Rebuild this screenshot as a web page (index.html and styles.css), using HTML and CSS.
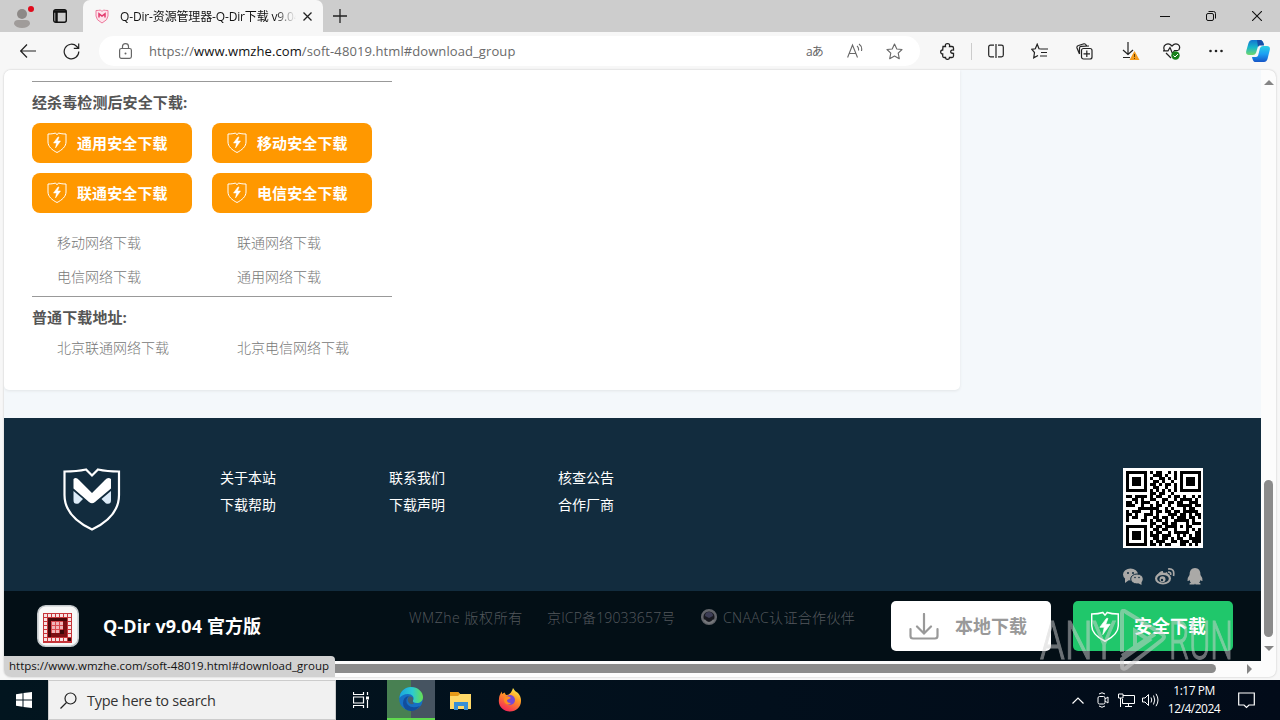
FILE: index.html
```html
<!DOCTYPE html>
<html lang="zh-CN">
<head>
  <meta charset="UTF-8">
  <title>Q-Dir-资源管理器-Q-Dir下载</title>
  <link rel="stylesheet" href="styles.css">
</head>
<body>
  <!-- shared icons -->
  <svg class="defs">
    <symbol id="shield" viewBox="0 0 20 21">
      <path d="M1 2C4 2 6.500 1.700 8.500 1L10 2.800 11.500 1C13.500 1.700 16 2 19 2V10C19 14.500 15 18 10 20.500 5 18 1 14.500 1 10Z" fill="none" stroke="currentColor" stroke-width="1"/>
      <path d="M11 5L6.500 11H9.500L8.500 16 13.500 9H10.500L12 5Z" fill="currentColor" stroke="currentColor" stroke-width=".5"/>
    </symbol>
  </svg>

  <div class="tabstrip">
    <svg class="profile" width="28" height="30" viewBox="0 0 28 30">
      <circle cx="14" cy="13" r="5" fill="#8d8987"/><path d="M6 23Q6 19 10 19H18Q22 19 22 23 20 27 14 27 8 27 6 23Z" fill="#a09c9a"/><circle cx="23" cy="8" r="3" fill="#e00b1c"/>
    </svg>
    <svg class="tab-menu" width="14" height="14" viewBox="0 0 14 14"><rect x=".7" y=".7" width="12.600" height="12.600" rx="2" fill="none" stroke="#111" stroke-width="1.400"/><path d="M1 2.500H13M3.500 3V13" stroke="#111" stroke-width="2.500"/></svg>
    <div class="tab">
      <svg width="14" height="15" viewBox="0 0 14 15"><path d="M1 1.500Q4 1.500 5.500 1L7 2.500 8.500 1Q10 1.500 13 1.500V7Q13 11 7 14 1 11 1 7Z" fill="#fde4ec" stroke="#ee7a9d"/><path d="M4 8.500V4.800L7 7 10 4.800V8.500" fill="none" stroke="#e33b6e" stroke-width="1.500"/></svg>
      <span class="tab-title">Q-Dir-资源管理器-Q-Dir下载 v9.04</span>
      <svg class="tab-close" width="9" height="9" viewBox="0 0 9 9"><path d="M.5.5L8.500 8.500M8.500.5L.5 8.500" stroke="#222" stroke-width="1.300"/></svg>
    </div>
    <svg class="new-tab" width="14" height="14" viewBox="0 0 14 14"><path d="M7 0V14M0 7H14" stroke="#222" stroke-width="1.300"/></svg>
    <div class="window-buttons">
      <svg width="10" height="10" viewBox="0 0 10 10"><path d="M0 5.500H10" stroke="#111"/></svg>
      <svg width="10" height="10" viewBox="0 0 10 10"><rect x=".5" y="2.500" width="7" height="7" rx="1.500" fill="none" stroke="#111"/><path d="M2.500.5H7.500Q9.500.5 9.500 2.500V7.500" fill="none" stroke="#111"/></svg>
      <svg width="10" height="10" viewBox="0 0 10 10"><path d="M0 0L10 10M10 0L0 10" stroke="#111" stroke-width="1.100"/></svg>
    </div>
  </div>

  <div class="toolbar">
    <svg class="back" width="16" height="14" viewBox="0 0 16 14"><path d="M16 7H1M7 .5L.7 7 7 13.500" fill="none" stroke="#222" stroke-width="1.200"/></svg>
    <svg class="reload" width="17" height="17" viewBox="0 0 17 17"><path d="M15.800 8.500A7.300 7.300 0 1 1 13.800 3.500L15.500 5.300M15.700.5V5.400H10.800" fill="none" stroke="#222" stroke-width="1.200"/></svg>
    <div class="address">
      <svg class="lock" width="13" height="16" viewBox="0 0 13 16"><rect x=".6" y="5.500" width="11.800" height="9.800" rx="1.800" fill="none" stroke="#666" stroke-width="1.200"/><path d="M3.500 5.500V3.500Q3.500.7 6.500.7T9.500 3.500V5.500" fill="none" stroke="#666" stroke-width="1.200"/><circle cx="6.500" cy="10.500" r="1" fill="#666"/></svg>
      <span class="url">https://<b>www.wmzhe.com</b>/soft-48019.html#download_group</span>
      <span class="translate">aあ</span>
      <svg class="read" width="16" height="16" viewBox="0 0 16 16"><path d="M.6 14.500L5.500 2 10.500 14.500M2.300 10.500H9M10 3Q12 4.500 11.500 7.500M12 1Q15.500 3.500 14.500 8" fill="none" stroke="#686868" stroke-width="1.100"/></svg>
      <svg class="star" width="17" height="17" viewBox="0 0 17 17"><path d="M8.500 1L10.800 6 16 6.500 12.200 10.200 13.300 15.700 8.500 13 3.700 15.700 4.800 10.200 1 6.500 6.200 6Z" fill="none" stroke="#686868" stroke-width="1.100" stroke-linejoin="round"/></svg>
    </div>
    <svg class="puzzle" width="16" height="17" viewBox="0 0 16 17"><path d="M3 3.500H5.500C5 1 6 .7 7.500.7S10 1 9.500 3.500H12Q13.500 3.500 13.500 5V7C10 6.500 9.500 10.500 13.500 10.500V13Q13.500 14.500 12 14.500H9.500C9.500 17 5.500 17 5.500 14.500H4Q2.700 14.500 2.700 13V11C0 11 0 7 2.700 7Z" fill="none" stroke="#222" stroke-width="1.300"/></svg>
    <i class="divider"></i>
    <svg class="split" width="16" height="14" viewBox="0 0 16 14"><path d="M6 1.200H2.500Q.7 1.200.7 3V11Q.7 12.800 2.500 12.800H6M10 1.200H13.500Q15.300 1.200 15.300 3V11Q15.300 12.800 13.500 12.800H10M8 0V14" fill="none" stroke="#222" stroke-width="1.200"/></svg>
    <svg class="favs" width="17" height="17" viewBox="0 0 17 17"><path d="M10 6L8 5.800 6.200 1.200 4.300 5.800.8 6.300 3.500 9.500 2.700 14.800 7 12.500M10 6H17M10 9.500H16M9 13H16" fill="none" stroke="#222" stroke-width="1.200"/></svg>
    <svg class="collect" width="17" height="17" viewBox="0 0 17 17"><rect x="5.500" y="5.500" width="10.500" height="10.500" rx="2" fill="none" stroke="#222" stroke-width="1.200"/><path d="M10.800 7.500V14M7.500 10.800H14M3.500 11L1 5Q.5 3 2.500 2.500L8 .8Q10 .5 10.500 3M3.500 11V5Q3.500 3.500 5 3.300L13 3" fill="none" stroke="#222" stroke-width="1.200"/></svg>
    <svg class="download" width="18" height="18" viewBox="0 0 18 18"><path d="M6 0V12M1 8L6 12.500 11 8M1 15.500H8" fill="none" stroke="#222" stroke-width="1.200"/><path d="M12.500 9L17.500 18H7.500Z" fill="#f59b1b"/><path d="M12.500 12V15M12.500 16V17" stroke="#684000"/></svg>
    <svg class="health" width="18" height="17" viewBox="0 0 18 17"><path d="M1.500 7.500C-1 2 5-1.500 9 3 13-1.500 19 2 15.500 7.500M0 7.800H5L7 4.500 9.500 10.500 11.500 7.500H15M3 10L8 15" fill="none" stroke="#222" stroke-width="1.200"/><circle cx="12.500" cy="12.500" r="4.200" fill="#18811b"/><path d="M10.500 12.500L12 14 15 11" fill="none" stroke="#fff"/></svg>
    <svg class="more" width="14" height="4" viewBox="0 0 14 4"><g fill="#222"><circle cx="1.500" cy="2" r="1.300"/><circle cx="7" cy="2" r="1.300"/><circle cx="12.500" cy="2" r="1.300"/></g></svg>
    <svg class="copilot" width="24" height="22" viewBox="0 0 24 22">
      <defs>
        <linearGradient id="cpa" x2="0" y2="1"><stop stop-color="#1375d1"/><stop offset=".5" stop-color="#19b6c9"/><stop offset="1" stop-color="#71d86b"/></linearGradient>
        <linearGradient id="cpb" x2="0" y2="1"><stop stop-color="#2bd0e4"/><stop offset=".5" stop-color="#1b9ff3"/><stop offset="1" stop-color="#1555c7"/></linearGradient>
      </defs>
      <path d="M6 0H14Q17 0 18 5H14Q12 5 11.500 8L10 13Q9 15 7 15H3Q-1 15 .5 10L2.500 3Q3.500 0 6 0Z" fill="url(#cpa)"/>
      <path d="M18 22H9Q7 22 6 17H10Q12 17 12.500 14L14 8Q15 6 17 6H21Q25 6 23.500 11L21.500 19Q20.500 22 18 22Z" fill="url(#cpb)"/>
      <path d="M14 0Q17 0 18 5.500H14Q13 5 12 7L11 0Z" fill="#164ea8"/>
    </svg>
  </div>

  <div class="window">
    <div class="row">
      <div class="page">
        <div class="main">
          <div class="card">
            <div class="group">
              <h4>经杀毒检测后安全下载:</h4>
              <div class="buttons">
                <a class="btn"><svg><use href="#shield"/></svg>通用安全下载</a>
                <a class="btn"><svg><use href="#shield"/></svg>移动安全下载</a>
                <a class="btn"><svg><use href="#shield"/></svg>联通安全下载</a>
                <a class="btn"><svg><use href="#shield"/></svg>电信安全下载</a>
              </div>
              <div class="links">
                <a>移动网络下载</a><a>联通网络下载</a>
                <a>电信网络下载</a><a>通用网络下载</a>
              </div>
            </div>
            <div class="group">
              <h4>普通下载地址:</h4>
              <div class="links compact">
                <a>北京联通网络下载</a><a>北京电信网络下载</a>
              </div>
            </div>
          </div>
        </div>

        <div class="footer">
          <svg class="logo" width="58" height="64" viewBox="0 0 58 64">
            <path d="M1.500 4.500Q14 4.500 23 2.500L29 8.500 35 2.500Q44 4.500 56 4.500V28C56 44 45 55 29 62.500 13 55 1.500 44 1.500 28Z" fill="none" stroke="#fff" stroke-width="2.200"/>
            <path d="M10.500 12Q13 9.500 16 13L29 26 42 13Q45 9.500 48 12V21.500L32 35Q29 37.500 26 35L10.500 21.500Z" fill="#fff"/>
            <path d="M10.500 24L20 32 15.500 36.500Q10.500 38 10.500 33ZM48 24L38.500 32 43 36.500Q48 38 48 33Z" fill="#dcebf8"/>
          </svg>
          <div class="footer-links">
            <a>关于本站</a><a>联系我们</a><a>核查公告</a>
            <a>下载帮助</a><a>下载声明</a><a>合作厂商</a>
          </div>
          <div class="follow">
            <svg id="qr" width="80" height="80" viewBox="0 0 80 80" shape-rendering="crispEdges"></svg>
            <div class="social">
              <svg width="20" height="17" viewBox="0 0 20 17"><g fill="#aaa9a7"><ellipse cx="7.500" cy="6.500" rx="7.500" ry="6"/><path d="M2 10V15L6 12Z"/><ellipse cx="14" cy="11" rx="6.300" ry="5" stroke="#122c3e"/><path d="M15 15L18.500 17V13Z"/></g><g fill="#122c3e"><circle cx="5" cy="5" r="1"/><circle cx="10" cy="5" r="1"/><circle cx="12" cy="9.500" r=".8"/><circle cx="16" cy="9.500" r=".8"/></g></svg>
              <svg width="20" height="17" viewBox="0 0 20 17"><ellipse cx="8" cy="10.500" rx="8" ry="6" fill="#aaa9a7"/><path d="M2 8Q4 3 8 3V6L12 4 13 7" fill="#aaa9a7"/><ellipse cx="8" cy="10.800" rx="5.800" ry="3.900" fill="#122c3e"/><circle cx="7.500" cy="11.300" r="3" fill="#aaa9a7"/><circle cx="7" cy="12" r="1.200" fill="#122c3e"/><path d="M13 1Q20 0 18.500 8M13 4Q16.500 4 15.500 7" fill="none" stroke="#aaa9a7" stroke-width="1.700"/></svg>
              <svg width="18" height="17" viewBox="1 0 18 17"><path d="M3.500 7Q3.500 0 9 0T14.500 7Q17 10 16.500 13 15 13 14.500 12 14 14 13 14.500 15 15 14.500 16.500H9.500L9 15.500 8.500 16.500H3.500Q3 15 5 14.500 4 14 3.500 12 3 13 1.500 13 1 10 3.500 7Z" fill="#aaa9a7"/></svg>
            </div>
          </div>
        </div>

        <div class="bottombar">
          <svg class="app-icon" width="42" height="42" viewBox="0 0 42 42">
            <defs><pattern id="dots" x="6" y="8" width="4" height="4" patternUnits="userSpaceOnUse"><rect x="1" y="1" width="3" height="3" fill="#fff" fill-opacity=".85"/></pattern></defs>
            <rect x=".8" y=".8" width="40.400" height="40.400" rx="8" fill="#f8f8f8" stroke="#c4c9cc" stroke-width="1.600"/>
            <rect x="6" y="8" width="29" height="30" fill="#c7353a"/><rect x="6" y="8" width="29" height="29" fill="url(#dots)"/>
            <rect x="11" y="13" width="19" height="19" fill="#7d1014"/><path d="M11 13H30V16H14V32H11Z" fill="#4a0709"/>
            <rect x="14" y="16" width="12" height="12" fill="#d94a4e"/><rect x="14" y="16" width="12" height="12" fill="url(#dots)" fill-opacity=".7"/><path d="M23 25H27V29H23ZM31 33H34V36H31Z" fill="#3c0709"/>
          </svg>
          <strong>Q-Dir v9.04 官方版</strong>
          <div class="copyright">
            <span class="owner">WMZhe 版权所有</span>
            <span class="icp">京ICP备19033657号</span>
            <svg width="18" height="18" viewBox="0 0 18 18"><circle cx="9" cy="9" r="6.800" fill="#17181f" stroke="#62646a" stroke-width="2.500"/><path d="M5 8Q5 4 9 4T13 8L9 10Z" fill="#3c3d55"/><path d="M4 12Q9 18 14 12" stroke="#75777b" stroke-width="2" fill="none"/></svg>
            <span class="cnaac">CNAAC认证合作伙伴</span>
          </div>
          <a class="local"><svg width="30" height="27" viewBox="0 0 30 27"><path d="M15 1V20M8 13.500L15 20.500 22 13.500M1.500 16V23Q1.500 25.500 4 25.500H26Q28.500 25.500 28.500 23V16" fill="none" stroke="#999" stroke-width="2.200" stroke-linecap="round"/></svg><span>本地下载</span></a>
          <a class="safe"><svg width="30" height="31"><use href="#shield"/></svg><span>安全下载</span></a>
        </div>
      </div>
      <div class="vscroll"><i class="up"></i><div class="thumb"></div><i class="down"></i></div>
    </div>
    <div class="hscroll"><div class="thumb"></div><i class="right"></i></div>
    <div class="status">https://www.wmzhe.com/soft-48019.html#download_group</div>
  </div>

  <svg class="watermark" width="210" height="64" viewBox="0 0 210 64">
    <text x="2" y="50" textLength="76" lengthAdjust="spacingAndGlyphs">ANY</text>
    <text x="131" y="50" textLength="64" lengthAdjust="spacingAndGlyphs">RUN</text>
    <path d="M84 43V4Q84 0 88 3L124 25Q128 28 124 31L88 59Q84 61 84 57V50L111 31 97 22V38L84 47M97 38L117 25"/>
  </svg>

  <div class="taskbar">
    <div class="start"><svg width="16" height="16" viewBox="0 0 16 16"><path d="M0 2.200L6.500 1.200V7.500H0ZM7.500 1.100L16 0V7.500H7.500ZM0 8.500H6.500V14.800L0 13.800ZM7.500 8.500H16V16L7.500 14.900Z" fill="#fff"/></svg></div>
    <div class="search"><svg width="17" height="17" viewBox="0 0 17 17"><circle cx="10.500" cy="6.500" r="5.500" fill="none" stroke="#222" stroke-width="1.200"/><path d="M6.500 10.500L.5 16.500" stroke="#222" stroke-width="1.300"/></svg><span>Type here to search</span></div>
    <div class="task"><svg width="16" height="16" viewBox="0 0 16 16"><path d="M.5 0V2.500H10.500V0M.5 16V13.500H10.500V16M.5 5H10.500V11H.5ZM14.500 0V3M14.500 8V16" fill="none" stroke="#fff" stroke-width="1.200"/><rect x="13" y="4.500" width="3" height="3" fill="#fff"/></svg></div>
    <div class="task active">
      <svg width="24" height="24" viewBox="0 0 24 24">
        <defs><linearGradient id="ea"><stop stop-color="#1aa5df"/><stop offset=".55" stop-color="#2ccbd0"/><stop offset="1" stop-color="#67df50"/></linearGradient></defs>
        <circle cx="12" cy="12" r="11.800" fill="#176fc3"/>
        <path d="M.5 11C1 4 6 0 12 0 19 0 24 5 24 10 24 14 21 16 18 16 15 16 13.500 15 14 13.500 16 10 13 7 9 7 5 7 2 9 .5 11Z" fill="url(#ea)"/>
        <path d="M10 9Q5 13 9 18 13 22 21 19 17 24 12 24 4 23 4 16 4 10 10 9Z" fill="#124d9c"/>
        <path d="M10 9.500Q7 13 10.500 16.500 13 18 15 16.500 13 15 14 13.500 15 9 10 9.500Z" fill="#46616d"/>
      </svg>
    </div>
    <div class="task"><svg width="22" height="19" viewBox="0 0 22 19"><path d="M0 1H8L10 3H21V18H0Z" fill="#ffd968"/><path d="M0 1H8L10 3 8 5H0Z" fill="#e69b19"/><path d="M4 11H18V19H14V15H8V19H4Z" fill="#378fd5"/></svg></div>
    <div class="task"><svg width="24" height="24" viewBox="0 0 24 24">
      <defs><linearGradient id="fx" x1=".8" y1="0" x2=".3" y2="1"><stop stop-color="#fff44f"/><stop offset=".4" stop-color="#ff9a24"/><stop offset="1" stop-color="#f52358"/></linearGradient></defs>
      <path d="M15 0Q17 4 20 5 23 8 23 13C23 19 18 23.500 12 23.500S.8 19 .8 13Q.8 7 4 3.500V6L6.500 4.500 8 7Q13 7 15 0Z" fill="url(#fx)"/>
      <circle cx="12" cy="12" r="5" fill="#7549d5"/><path d="M7 9Q10 7 13 10L9 12Q9 15 13 15 10 18 7 15 5 12 7 9Z" fill="#ff8e20"/></svg></div>
    <div class="tray">
      <svg width="12" height="7" viewBox="0 0 12 7"><path d="M.5 6.500L6 1 11.500 6.500" fill="none" stroke="#fff" stroke-width="1.200"/></svg>
      <svg class="meet" width="12" height="16" viewBox="0 0 12 16"><rect x="1" y="4.500" width="7" height="7.500" rx="1.500" fill="none" stroke="#fff"/><path d="M8 7L11 5V11L8 9M2 2Q5-.5 8 2M2 14Q5 16.500 8 14" fill="none" stroke="#fff"/></svg>
      <svg width="17" height="15" viewBox="0 0 17 15"><path d="M5 2.500H16.500V10.500H4.500V6M10.500 10.500V13.500M7 13.500H14M.5 1H5V5H.5ZM2.500 5V14" fill="none" stroke="#fff"/></svg>
      <svg class="sound" width="17" height="14" viewBox="0 0 17 14"><path d="M.5 5H3L6.500 1.500V12.500L3 9H.5ZM9 4.500Q10.500 7 9 9.500M11.500 2.500Q14 7 11.500 11.500M14 .8Q18 7 14 13.200" fill="none" stroke="#fff"/></svg>
      <div class="clock"><span>1:17 PM</span><span>12/4/2024</span></div>
      <svg class="notice" width="17" height="17" viewBox="0 0 17 17"><path d="M.7 1H16.300V13H11L8.500 15.500 6 13H.7Z" fill="none" stroke="#fff" stroke-width="1.200"/></svg>
    </div>
  </div>
  <script src="qr.js"></script>
</body>
</html>
```

FILE: styles.css
```css
* {
  box-sizing: border-box;
}

body {
  margin: 0;
  width: 1280px;
  height: 720px;
  overflow: hidden;
  display: flex;
  flex-direction: column;
  position: relative;
  background: #f7f7f7;
  font-family: "Open Sans", "Noto Sans CJK SC", sans-serif;
}

svg {
  display: block;
  flex: none;
}

.defs {
  position: absolute;
  width: 0;
  height: 0;
}

/* Browser tabs */
.tabstrip {
  display: flex;
  align-items: center;
  height: 32px;
  background: #cdcdcd;
}

.profile {
  margin-left: 8px;
}

.tab-menu {
  margin-left: 17px;
}

.tab {
  display: flex;
  align-items: center;
  width: 240px;
  height: 32px;
  margin-left: 16px;
  padding-left: 12px;
  background: #f7f7f7;
  border-radius: 7px 7px 0 0;
}

.tab-title {
  width: 176px;
  margin-left: 11px;
  font-size: 12px;
  letter-spacing: -0.15px;
  color: #111;
  white-space: nowrap;
  overflow: hidden;
  -webkit-mask-image: linear-gradient(90deg, #000 155px, transparent 176px);
  mask-image: linear-gradient(90deg, #000 155px, transparent 176px);
}

.tab-close {
  margin-left: 7px;
}

.new-tab {
  margin-left: 10px;
}

.window-buttons {
  display: flex;
  gap: 36px;
  margin-left: auto;
  margin-right: 18px;
}

/* Toolbar */
.toolbar {
  display: flex;
  align-items: center;
  height: 38px;
}

.back {
  margin-left: 20px;
}

.reload {
  margin-left: 27px;
}

.address {
  display: flex;
  align-items: center;
  width: 821px;
  height: 30px;
  margin-left: 19px;
  padding-left: 20px;
  background: #fff;
  border-radius: 15px;
}

.url {
  width: 380px;
  margin-left: 17px;
  font-size: 13px;
  letter-spacing: 0.09px;
  color: #6a6a6a;
  white-space: nowrap;
}

.url b {
  font-weight: 400;
  color: #111;
}

.translate {
  width: 20px;
  margin-left: 277px;
  font-size: 12px;
  letter-spacing: -1px;
  color: #666;
}

.read {
  margin-left: 21px;
}

.star {
  margin-left: 23px;
}

.puzzle {
  margin-left: 20px;
}

.divider {
  width: 1px;
  height: 17px;
  margin-left: 15px;
  background: #ccc;
}

.split {
  margin-left: 16px;
}

.favs {
  margin-left: 27px;
}

.collect {
  margin-left: 28px;
}

.download {
  margin-left: 29px;
}

.health {
  margin-left: 23px;
}

.more {
  margin-left: 28px;
}

.copilot {
  margin-left: 23px;
}

/* Page window */
.window {
  position: relative;
  width: 1272px;
  height: 607px;
  margin: 0 4px 3px;
  border-radius: 7px;
  overflow: hidden;
  background: #fcfcfc;
  box-shadow: 0 0 2px #bbb;
}

.row {
  display: flex;
}

.page {
  width: 1257px;
  height: 591px;
}

.main {
  height: 348px;
  background: #f4f8fb;
}

.card {
  width: 956px;
  height: 320px;
  padding: 11px 28px 0;
  background: #fff;
  border-radius: 0 0 5px 5px;
  box-shadow: 0 1px 3px #e2e5e7;
}

.group {
  width: 360px;
  border-top: 1px solid #999;
}

.group h4 {
  margin: 0;
  padding-top: 8px;
  font-size: 15px;
  line-height: 24px;
  letter-spacing: 0.1px;
  color: #555;
}

.buttons {
  display: grid;
  grid-template-columns: 160px 160px;
  gap: 10px 20px;
  margin-top: 9px;
}

.btn {
  display: flex;
  align-items: center;
  gap: 10px;
  height: 40px;
  padding: 0 0 2px 15px;
  border-radius: 8px;
  background: #ff9800;
  color: #fff;
  font-size: 15px;
  font-weight: 700;
  letter-spacing: 0.1px;
}

.btn svg {
  width: 20px;
  height: 21px;
}

.links {
  display: grid;
  grid-template-columns: 180px 180px;
  padding: 13px 0 2px;
  font-size: 14px;
  font-weight: 300;
  line-height: 34px;
  color: #777;
}

.links a {
  padding-left: 25px;
}

.links.compact {
  padding-top: 2px;
}

/* Dark footer */
.footer {
  display: flex;
  height: 173px;
  padding: 49px 58px 0 59px;
  background: #122c3e;
}

.footer-links {
  display: grid;
  grid-template-columns: 169px 169px 169px;
  grid-auto-rows: 27px;
  align-content: start;
  margin-left: 99px;
  margin-top: -3px;
  color: #fff;
  font-size: 14px;
  font-weight: 400;
  line-height: 27px;
}

.follow {
  width: 80px;
  margin-left: auto;
  margin-top: 1px;
}

.social {
  display: flex;
  gap: 12px;
  margin-top: 20px;
}

.bottombar {
  display: flex;
  height: 70px;
  align-items: center;
  padding-left: 33px;
  background: #030f16;
  color: #fff;
}

.bottombar strong {
  width: 180px;
  margin-left: 24px;
  padding-bottom: 2px;
  font-size: 18px;
  font-weight: 700;
  letter-spacing: 0.1px;
  white-space: nowrap;
}

.copyright {
  display: flex;
  align-items: center;
  width: 482px;
  margin-left: 126px;
  margin-top: -19px;
  font-size: 14px;
  font-weight: 300;
  color: #53585d;
  white-space: nowrap;
}

.owner {
  width: 138px;
  letter-spacing: 0.55px;
}

.icp {
  width: 153px;
  letter-spacing: 0.15px;
}

.cnaac {
  margin-left: 5px;
  letter-spacing: 0.35px;
}

.local,
.safe {
  display: flex;
  align-items: center;
  width: 160px;
  height: 50px;
  padding-left: 18px;
  gap: 16px;
  border-radius: 5px;
  background: #fff;
  color: #999;
  font-size: 18px;
  font-weight: 700;
}

.local span,
.safe span {
  padding-bottom: 2px;
}

.safe {
  margin-left: 22px;
  padding-left: 17px;
  gap: 14px;
  background: #20c76b;
  color: #fff;
}

/* Scrollbars */
.vscroll {
  display: flex;
  flex-direction: column;
  align-items: center;
  width: 15px;
  height: 591px;
  padding-top: 10px;
}

.up,
.down {
  border: 5px solid transparent;
  border-top-width: 0;
  border-bottom-color: #858585;
}

.down {
  margin-top: 9px;
  border-top: 5px solid #858585;
  border-bottom-width: 0;
}

.vscroll .thumb {
  width: 9px;
  height: 157px;
  margin-top: 395px;
  border-radius: 5px;
  background: #8b8b8b;
}

.hscroll {
  display: flex;
  align-items: center;
  height: 15px;
}

.hscroll .thumb {
  width: 1197px;
  height: 9px;
  margin-left: 15px;
  border-radius: 5px;
  background: #8b8b8b;
}

.right {
  margin-left: 31px;
  border: 5px solid transparent;
  border-left-color: #858585;
  border-right-width: 0;
}

.status {
  position: absolute;
  left: 0;
  bottom: 0;
  width: 331px;
  height: 21px;
  padding-left: 5px;
  border-radius: 0 4px 0 4px;
  background: #d1d1d1;
  color: #111;
  font-size: 11.5px;
  line-height: 20px;
  letter-spacing: 0;
  white-space: nowrap;
}

.watermark {
  position: absolute;
  left: 1038px;
  top: 609px;
  opacity: 0.5;
}

.watermark text {
  font-family: Roboto, sans-serif;
  font-size: 53px;
  font-weight: 300;
  fill: #d3d3d3;
  stroke: #d3d3d3;
  stroke-width: 1.2;
}

.watermark path {
  fill: none;
  stroke: #d3d3d3;
  stroke-width: 4;
}

/* Windows taskbar */
.taskbar {
  display: flex;
  height: 40px;
  background: linear-gradient(90deg, #02151f, #020f1c 60%, #020b19);
  color: #fff;
}

.start,
.task {
  display: flex;
  align-items: center;
  justify-content: center;
  width: 49px;
}

.start {
  width: 48px;
}

.search {
  display: flex;
  align-items: center;
  width: 288px;
  padding-left: 11px;
  background: #f1f1f1;
  border: 1px solid #ccc;
}

.search span {
  margin-left: 10px;
  font-size: 14.5px;
  letter-spacing: -0.25px;
  color: #333;
}

.task.active {
  width: 48px;
  margin: 0 1px 0 2px;
  background: linear-gradient(90deg, #488052 50%, #465461 50%);
  border-bottom: 2px solid #60da4e;
}

.tray {
  display: flex;
  align-items: center;
  margin-left: auto;
  padding-right: 25px;
}

.tray svg + svg {
  margin-left: 9px;
}

.tray svg.meet {
  margin-left: 13px;
}

.tray svg.sound {
  margin-left: 7px;
}

.clock {
  display: flex;
  flex-direction: column;
  align-items: center;
  width: 54px;
  margin: 0 17px 0 8px;
  font-size: 12px;
  line-height: 18px;
  letter-spacing: -0.5px;
  white-space: nowrap;
}
```

FILE: qr.js
```js
// One string per module row
const rows = [
  '1111111.1.11..1.1.1111111',
  '1.....1..111.1..1.1.....1',
  '1.111.1.1..11.1.1.1.111.1',
  '1.111.1..11.1..1..1.111.1',
  '1.111.1.11.1.11.1.1.111.1',
  '1.....1..11..1..1.1.....1',
  '1111111.1.1.1.1.1.1111111',
  '........11.11..1.........',
  '11.1111.1.11..1.11.1..1.1',
  '..11.1..11..11..1.1111.1.',
  '11.1.111..1.1.11.11..111.',
  '111..1..1.11..1..11111.11',
  '....1111111..1.1...1.11..',
  '1.111...1.11.11.11.11111.',
  '11.1..111.1...111.11.1.11',
  '1.11..1..11.11.1.111.11.1',
  '1....11.1.11.1..11111.1..',
  '........11..11.11...1.111',
  '1111111.1.11.1111.1.11...',
  '1.....1..11.11..1...1.1.1',
  '1.111.1.1.11..1.11111..11',
  '1.111.1.111.111..1.1.1.11',
  '1.111.1..11.11.1.11..1111',
  '1.....1.1.111..11.111.111',
  '1111111.11.1.11...11.1.1.'
];

let d = '';
rows.forEach(function(row, y) {
  for (let x = 0; x < row.length; x++) {
    if (row[x] === '1') {
      d += `M${3 + x * 3} ${3 + y * 3}h3v3h-3z`;
    }
  }
});
document.getElementById('qr').innerHTML = `<rect width="80" height="80" fill="#fff"/><path d="${d}"/>`;
```
